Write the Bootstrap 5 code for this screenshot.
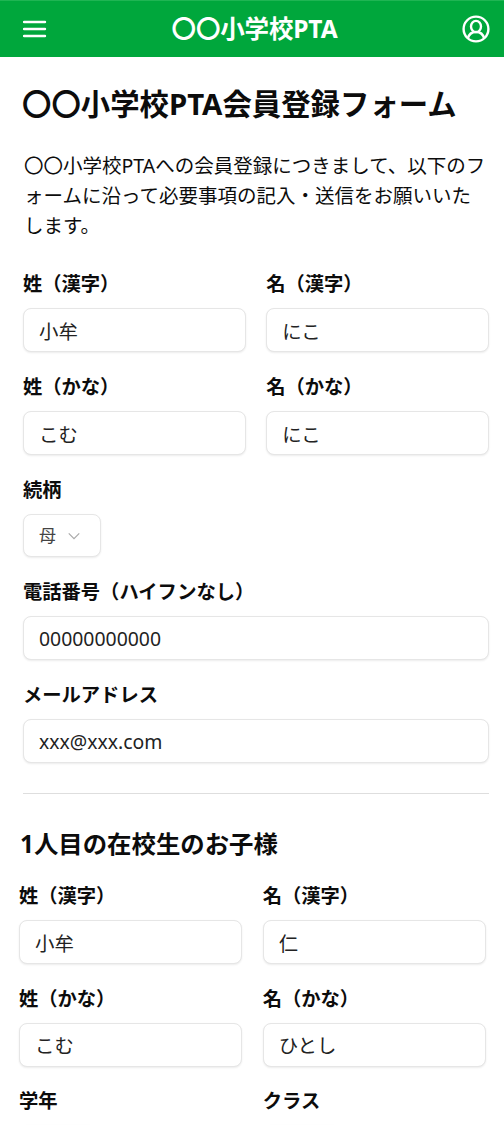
<!DOCTYPE html>
<html lang="ja"><head><meta charset="utf-8">
<meta name="viewport" content="width=device-width, initial-scale=1">
<link href="https://cdn.jsdelivr.net/npm/bootstrap@5.3.0/dist/css/bootstrap.min.css" rel="stylesheet">
<style>
html,body{height:1125px;overflow:hidden}
body{font-family:"Noto Sans","Noto Sans CJK JP",sans-serif;color:#0c0c0c;background:#fff}
.topbar{height:57px;background:#00a73c;border-top:1px solid #1fb553;padding:0 14px 0 23px}
.brand{font-size:24.5px;font-weight:700;color:#fff;line-height:1;letter-spacing:-.15px}
.page-title{font-size:29.4px;font-weight:700;line-height:36px;margin:29px 0 0 22px;white-space:nowrap}
.intro{font-size:19.5px;line-height:30px;margin:29px 18px 0 24px}
.form-a{padding:0 15px 0 23px;margin-top:29px}
.form-b{padding:0 18px 0 19px;margin-top:22px}
.fgrid{display:grid;grid-template-columns:1fr 1fr;column-gap:20.500px;row-gap:21px}
.form-b .fgrid{row-gap:20.500px}
.field-label{font-size:19.3px;font-weight:700;line-height:28px;margin-bottom:10px;display:block;white-space:nowrap}
.form-control.fi,.form-select.fs{height:44px;border:1px solid #e6e6e6;border-radius:8px;font-size:19.4px;color:#222;padding:0 15px;box-shadow:0 1px 2px rgba(0,0,0,.08);background-color:#fff}
.form-select.fs{height:43px;width:78px;background-size:14px 14px;background-position:right 19px center;color:#444;font-size:17px;--bs-form-select-bg-img:url("data:image/svg+xml,%3csvg xmlns='http://www.w3.org/2000/svg' viewBox='0 0 16 16'%3e%3cpath fill='none' stroke='%23aaa' stroke-width='1.4' d='M2 5l6 6 6-6'/%3e%3c/svg%3e")}
.one{margin-top:21px}
.rule{margin:30px 15px 0 23px;border:0;border-top:1px solid #dedede;opacity:1}
.sec-title{font-size:24.4px;font-weight:700;line-height:32px;margin:34px 0 0 20px;white-space:nowrap}
</style></head><body>
<header class="topbar d-flex align-items-center justify-content-between">
<svg width="24" height="18" viewBox="0 0 24 18" aria-label="menu"><path d="M1 2h21M1 9h21M1 16h21" stroke="#fff" stroke-width="2.4" stroke-linecap="round"/></svg>
<div class="brand">〇〇小学校PTA</div>
<svg width="28" height="28" viewBox="0 0 28 28" fill="none" stroke="#fff" stroke-width="2.4" aria-label="account"><circle cx="14" cy="14" r="12.4"/><ellipse cx="14" cy="11.5" rx="5" ry="5.600"/><path d="M5.800 23.500c1-4.200 3.800-6.500 8.200-6.500s7.200 2.300 8.200 6.500"/></svg>
</header>
<h1 class="page-title">〇〇小学校PTA会員登録フォーム</h1>
<p class="intro">〇〇小学校PTAへの会員登録につきまして、以下のフォームに沿って必要事項の記入・送信をお願いいたします。</p>
<form class="form-a">
<div class="fgrid">
<div><label class="field-label">姓（漢字）</label><input class="form-control fi" value="小牟"></div>
<div><label class="field-label">名（漢字）</label><input class="form-control fi" value="にこ"></div>
<div><label class="field-label">姓（かな）</label><input class="form-control fi" value="こむ"></div>
<div><label class="field-label">名（かな）</label><input class="form-control fi" value="にこ"></div>
</div>
<div class="one"><label class="field-label">続柄</label><select class="form-select fs"><option>母</option></select></div>
<div class="one"><label class="field-label">電話番号（ハイフンなし）</label><input class="form-control fi" value="00000000000"></div>
<div class="one"><label class="field-label">メールアドレス</label><input class="form-control fi" value="xxx@xxx.com"></div>
</form>
<hr class="rule">
<h2 class="sec-title">1人目の在校生のお子様</h2>
<form class="form-b">
<div class="fgrid">
<div><label class="field-label">姓（漢字）</label><input class="form-control fi" value="小牟"></div>
<div><label class="field-label">名（漢字）</label><input class="form-control fi" value="仁"></div>
<div><label class="field-label">姓（かな）</label><input class="form-control fi" value="こむ"></div>
<div><label class="field-label">名（かな）</label><input class="form-control fi" value="ひとし"></div>
<div><label class="field-label">学年</label><select class="form-select fs"><option>1</option></select></div>
<div><label class="field-label">クラス</label><select class="form-select fs"><option>1</option></select></div>
</div>
</form>
<script src="https://cdn.jsdelivr.net/npm/bootstrap@5.3.0/dist/js/bootstrap.bundle.min.js"></script>
</body></html>
